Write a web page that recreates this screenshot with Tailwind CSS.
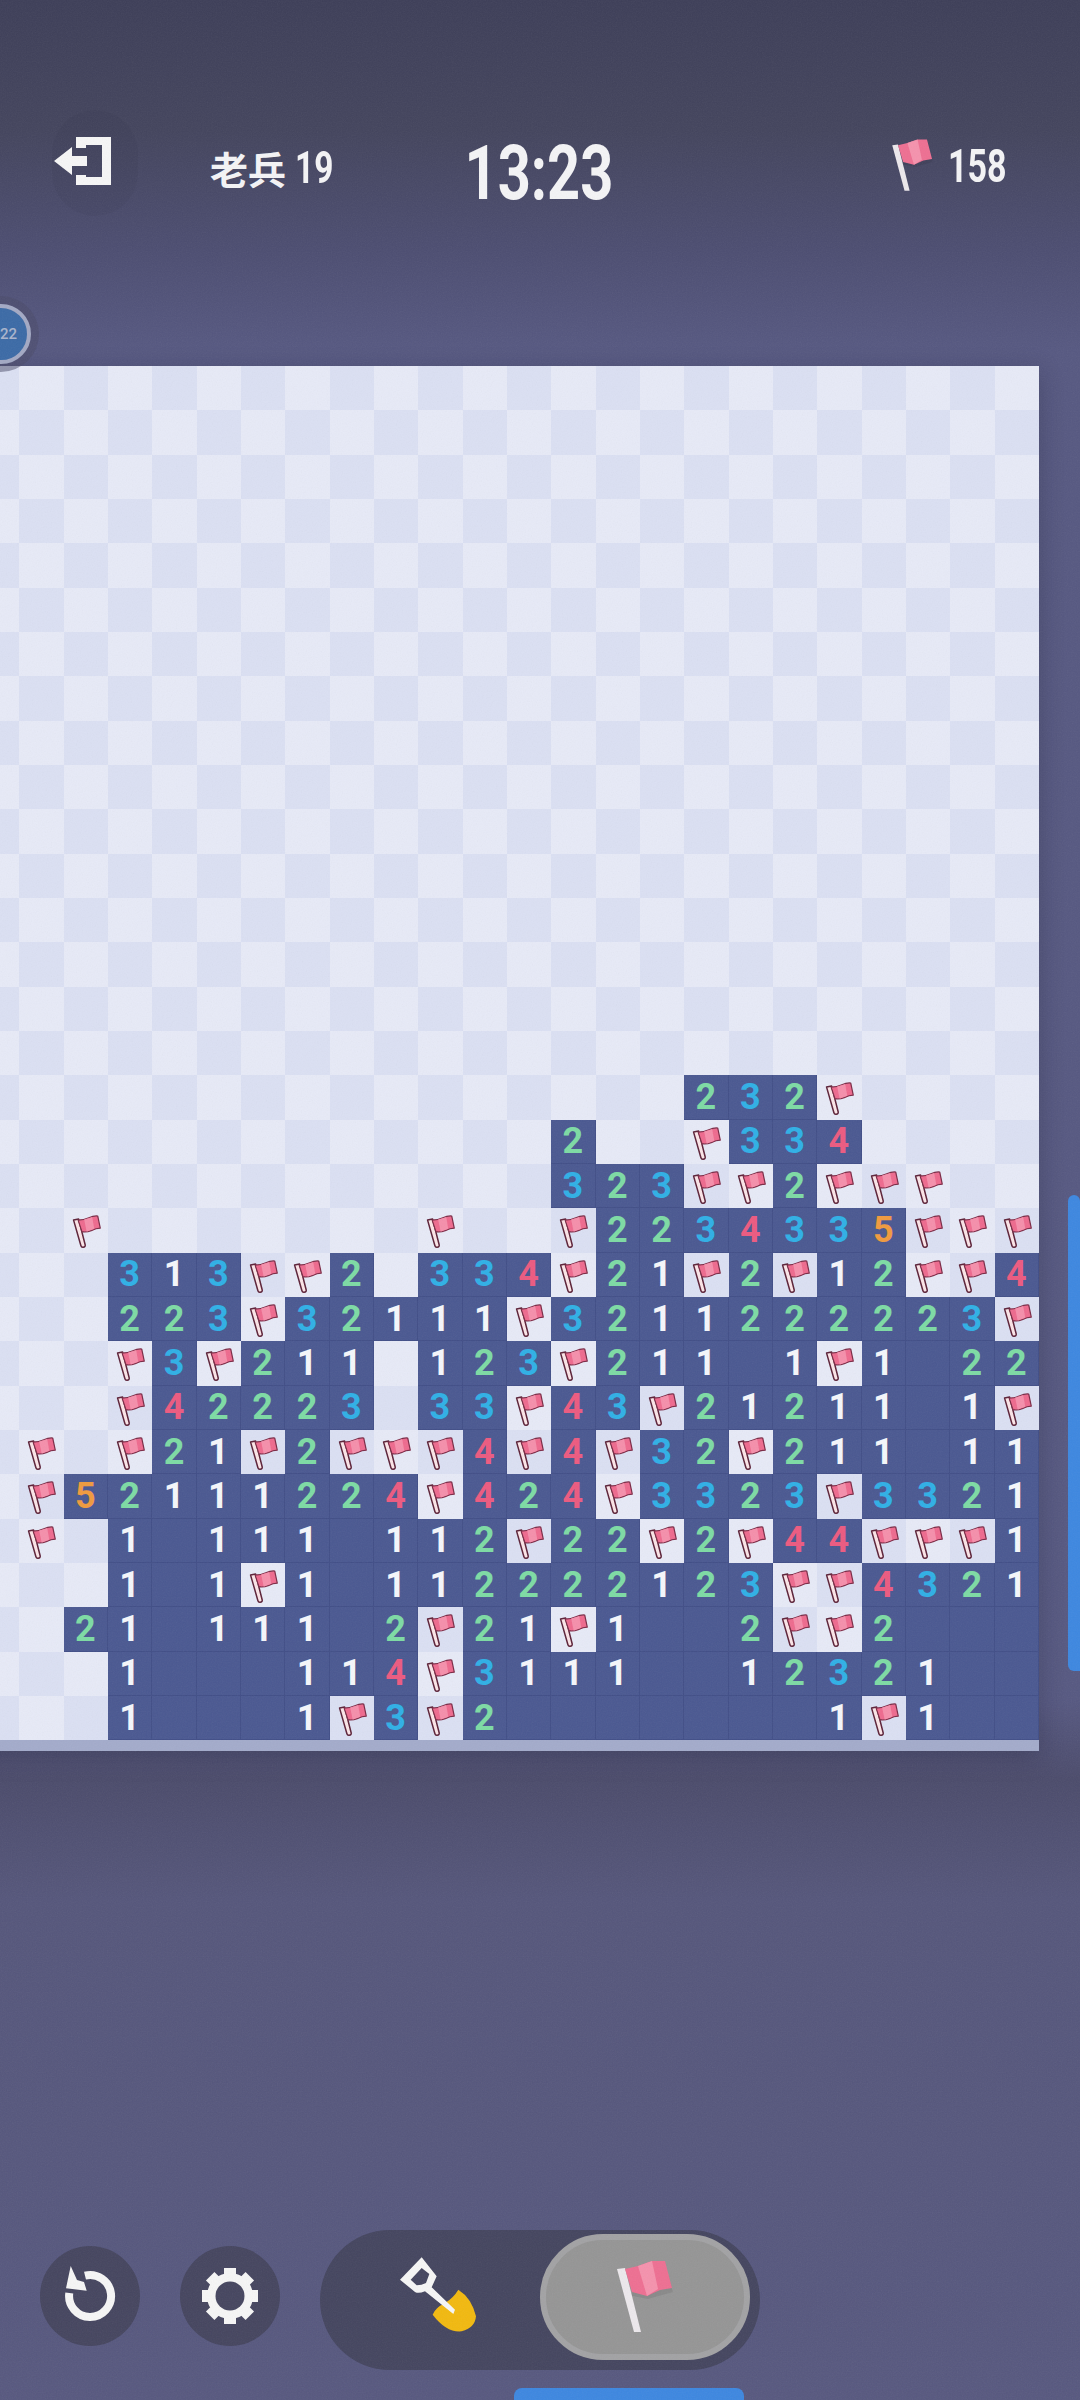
<!DOCTYPE html>
<html lang="zh">
<head>
  <meta charset="UTF-8" />
  <title>扫雷</title>
  <script src="https://cdn.jsdelivr.net/npm/@tailwindcss/browser@4"></script>
</head>
<body class="overflow-hidden">
  <svg class="hidden">
    <!-- small flag on a board cell -->
    <symbol id="cell-flag" viewBox="0 0 44 44">
      <path d="M9.500 12 L14.500 11 L21 36.500 Q21.500 38.800 19 39 Q17.300 39.300 16.800 37.500 Z" fill="#fbe4e7" stroke="#5c2238" stroke-width="1.500" stroke-linejoin="round"/>
      <path d="M14 12 Q20 12 24 10 Q30 7.500 33.500 8 L36 20 Q32 20 27 22.500 Q22 24.500 17.800 23.500 Z" fill="#ee6a8e" stroke="#7a2a45" stroke-width="1.200" stroke-linejoin="round"/>
      <path d="M20 11.500 L28 9 L30 20.500 L22.500 23.500 Z" fill="#f58fab"/>
    </symbol>
    <!-- big flag, header and mode switch -->
    <symbol id="big-flag" viewBox="0 0 62 76">
      <path d="M14 36 L34 40 L59 33 L53 12 Z" fill="#000" opacity="0.08"/>
      <path d="M3 10 L11 9 L27 73 L20 73 Z" fill="#ece8ec"/>
      <path d="M11 10 L24 7 L38 2 L51 2 L58 29 L46 31 L33 37 L18 33 Z" fill="#ee6f92"/>
      <path d="M24 7 L38 2 L44 30 L33 37 Z" fill="#f592ad"/>
    </symbol>
  </svg>

  <div class="relative w-[1080px] h-[2400px] overflow-hidden flex flex-col bg-[linear-gradient(180deg,#3d3e58_0px,#43445d_130px,#4c4d71_250px,#565881_350px,#565881_1700px,#4b4b6b_1780px,#55567b_1900px,#57587f_2400px)] font-['Roboto',sans-serif]">

    <!-- header -->
    <div class="h-[366px] shrink-0 flex items-start pt-[110px] text-[#f4f4f6]">
      <div class="ml-[52px] w-[86px] h-[106px] rounded-full bg-black/[0.03] flex items-start pt-[27px] pl-[2px] shrink-0">
        <svg class="w-[57px] h-[48px]" viewBox="0 0 57 48" fill="#f6f6f6">
          <path d="M22 0 H57 V48 H22 V38 H32 V40 H48 V8 H32 V11 H22 Z"/>
          <path d="M0 24 L18 10 V19 H33 V29 H18 V38 Z"/>
        </svg>
      </div>
      <div class="ml-[72px] mt-[36px] flex items-center w-[255px] shrink-0 font-bold">
        <span class="text-[38px] leading-[44px] font-['Noto_Sans_CJK_SC',sans-serif]">老兵</span>
        <span class="ml-[9px] text-[44px] leading-[44px] font-bold inline-block origin-left scale-x-[0.76]">19</span>
      </div>
      <div class="mt-[22px] w-[148px] flex justify-center shrink-0">
        <span class="text-[76px] leading-[82px] font-bold scale-x-[0.76] inline-block">13:23</span>
      </div>
      <svg class="ml-[277px] mt-[28px] w-[45px] h-[55px] shrink-0"><use href="#big-flag"/></svg>
      <span class="ml-[13px] mt-[29px] text-[46px] leading-[54px] font-bold inline-block origin-left scale-x-[0.74]">158</span>
    </div>

    <!-- board -->
    <div class="ml-[-25px] w-[1064px] shrink-0 shadow-[0_6px_22px_rgba(20,20,40,0.25)]">
      <div id="board" class="grid grid-cols-[repeat(24,44.333px)] auto-rows-[44.333px]"></div>
      <div class="h-[11px] bg-[#a3abcb]"></div>
    </div>

    <!-- tools -->
    <div class="mt-[479px] flex items-center pl-[40px]">
      <div class="mb-[8px] w-[100px] h-[100px] rounded-full bg-[#45455f] flex items-center justify-center">
        <svg class="w-[60px] h-[60px]" viewBox="0 0 60 60" fill="none">
          <path d="M25 9.600 A21 21 0 1 1 9.300 27" stroke="#f6f6f6" stroke-width="8"/>
          <path d="M10.700 0 L6 22.300 L26.700 24.700 L24 16 L17 14 Z" fill="#f6f6f6"/>
        </svg>
      </div>
      <div class="mb-[8px] ml-[40px] w-[100px] h-[100px] rounded-full bg-[#45455f] flex items-center justify-center">
        <svg class="w-[58px] h-[58px]" viewBox="0 0 58 58" fill="#f6f6f6">
          <circle cx="29" cy="29" r="18.500" fill="none" stroke="#f6f6f6" stroke-width="9"/>
          <rect x="23" y="1" width="12" height="56"/>
          <rect x="1" y="23" width="56" height="12"/>
          <rect x="23" y="1" width="12" height="56" transform="rotate(45 29 29)"/>
          <rect x="23" y="1" width="12" height="56" transform="rotate(-45 29 29)"/>
          <circle cx="29" cy="29" r="14.500" fill="#45455f"/>
        </svg>
      </div>
      <div class="ml-[40px] w-[440px] h-[140px] rounded-full bg-[#44455f] flex items-center pl-[70px]">
        <svg class="w-[100px] h-[100px] shrink-0 mt-[-4px]" viewBox="0 0 300 300">
          <path d="M205 125 Q245 150 258 205 Q255 240 215 250 Q170 255 128 200 Q135 180 165 165 Q190 150 205 125 Z" fill="#f2b90f"/>
          <path fill-rule="evenodd" fill="#f6f6f6" d="M95 28 L140 85 L125 118 L195 185 L190 198 L105 130 Q85 138 75 132 L30 95 Z M95 60 L62 95 L80 112 Q95 112 108 105 L118 78 Z"/>
        </svg>
        <div class="ml-[50px] mb-[6px] w-[210px] h-[126px] rounded-full bg-[#959595] border-[6px] border-[#a2a2a4] flex items-center justify-center shrink-0">
          <svg class="w-[62px] h-[76px]"><use href="#big-flag"/></svg>
        </div>
      </div>
    </div>

    <!-- overlays -->
    <div class="absolute left-[-37px] top-[296px] w-[76px] h-[76px] rounded-full bg-[#4a4a68]/50 flex items-center justify-center">
      <div class="w-[60px] h-[60px] rounded-full bg-[#3b6aa6] border-[4px] border-[#a3a9c4] flex items-center justify-end pr-[10px] text-[15px] font-medium text-[#a9b4cc]">22</div>
    </div>
    <div class="absolute right-0 top-[1195px] w-[12px] h-[476px] rounded-l-full rounded-tr-full bg-[#3d87e0]"></div>
    <div class="absolute left-[514px] top-[2388px] w-[230px] h-[12px] rounded-t-[8px] bg-[#3d87e0]"></div>

    <!-- grain -->
    <svg class="absolute inset-0 w-full h-full pointer-events-none opacity-[0.07]">
      <filter id="grain"><feTurbulence type="fractalNoise" baseFrequency="0.8" numOctaves="2"/><feColorMatrix type="saturate" values="0"/></filter>
      <rect width="100%" height="100%" filter="url(#grain)"/>
    </svg>
  </div>

  <script>
    // . covered, _ open and empty, F flag, digits open
    const blank = '.'.repeat(24);
    const rows = [
      ...Array(16).fill(blank),
      '................232F....',
      '.............2..F334....',
      '.............323FF2FFF..',
      '..F.......F..F2234335FFF',
      '...313FF2.334F21F2F12FF4',
      '...223F32111F3211222223F',
      '...F3F211.123F211_1F1_22',
      '...F42223.33F43F21211_1F',
      '.F.F21F2FFF4F4F32F211_11',
      '.F52111224F424F3323F3321',
      '.F.1_111_112F22F2F44FFF1',
      '...1_1F1_112222123FF4321',
      '..21_111_2F21F1__2FF2___',
      '...1___114F3111__12321__',
      '...1___1F3F2_______1F1__',
    ];
    const digitClass = {
      1: 'text-[#f5f7fb]',
      2: 'text-[#7ddba4]',
      3: 'text-[#2fb0e6]',
      4: 'text-[#ec5a80]',
      5: 'text-[#f09a3e]',
    };
    const board = document.getElementById('board');
    let html = '';
    rows.forEach((row, r) => {
      [...row].forEach((ch, c) => {
        const covered = ch === '.' || ch === 'F';
        if (covered) {
          const shade = (r + c) % 2 ? 'bg-[#e7eaf7]' : 'bg-[#dbe0f3]';
          const flag = ch === 'F' ? '<svg class="w-full h-full"><use href="#cell-flag"/></svg>' : '';
          html += `<div class="${shade}">${flag}</div>`;
        } else {
          const digit = ch === '_' ? '' : ch;
          html += `<div class="bg-[#4a5891] border-r border-b border-[#414e87] flex items-center justify-center text-[36px] font-bold leading-none ${digitClass[ch] || ''}">${digit}</div>`;
        }
      });
    });
    board.innerHTML = html;
  </script>
</body>
</html>
